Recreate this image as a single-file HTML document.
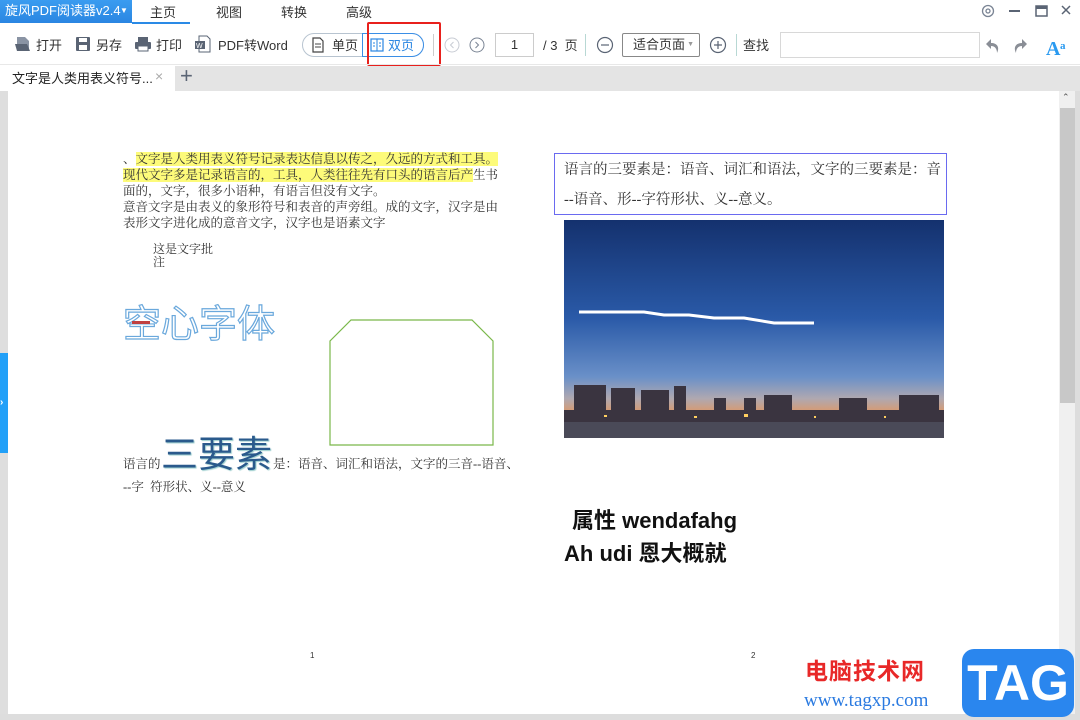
<!DOCTYPE html>
<html><head><meta charset="utf-8"><style>
*{margin:0;padding:0;box-sizing:border-box}
body{width:1080px;height:720px;overflow:hidden;background:#fff;position:relative;font-family:"Liberation Sans","Noto Sans CJK SC",sans-serif;font-size:12px;color:#333}
.a{position:absolute;white-space:nowrap}
.serif{font-family:"Liberation Serif","Noto Serif CJK SC",serif}
</style></head><body>
<!-- title bar -->
<div class="a" style="left:0;top:0;width:132px;height:23px;background:linear-gradient(#3a9cf0,#2a86e2);color:#fff;font-size:13px;line-height:22px;padding-left:5px">旋风PDF阅读器v2.4<span style="position:absolute;left:120px;top:0;font-size:8px">▼</span></div>
<div class="a" style="left:132px;top:22px;width:58px;height:2px;background:#2a8ae6"></div>
<div class="a" style="left:150px;top:2px;font-size:13px;color:#333">主页</div>
<div class="a" style="left:216px;top:2px;font-size:13px">视图</div>
<div class="a" style="left:281px;top:2px;font-size:13px">转换</div>
<div class="a" style="left:346px;top:2px;font-size:13px">高级</div>
<svg class="a" style="left:980px;top:3px" width="95" height="16"><circle cx="8" cy="8" r="5.5" fill="none" stroke="#7a8494" stroke-width="1.3"/><circle cx="8" cy="8" r="2" fill="none" stroke="#7a8494" stroke-width="1.3"/><rect x="29" y="7" width="11" height="2" fill="#5a6474"/><rect x="56" y="3" width="11" height="10" fill="none" stroke="#5a6474" stroke-width="1.5"/><rect x="56" y="3" width="11" height="3" fill="#5a6474"/><path d="M82 3l8 8M90 3l-8 8" stroke="#5a6474" stroke-width="1.5"/></svg>
<!-- toolbar -->
<svg class="a" style="left:14px;top:35px" width="18" height="18"><path d="M3 2h8l4 4v10H3z" fill="#8a94a4"/><path d="M1 9h12l3 7H3z" fill="#5a6474"/></svg>
<div class="a" style="left:36px;top:35px;font-size:13px">打开</div>
<svg class="a" style="left:74px;top:35px" width="18" height="18"><rect x="2" y="2" width="14" height="14" rx="1" fill="#5a6474"/><rect x="5" y="3" width="8" height="4" fill="#fff"/><rect x="5" y="10" width="8" height="5" fill="#fff"/></svg>
<div class="a" style="left:96px;top:35px;font-size:13px">另存</div>
<svg class="a" style="left:134px;top:35px" width="18" height="18"><rect x="4" y="2" width="10" height="5" fill="#5a6474"/><rect x="1" y="7" width="16" height="7" rx="1" fill="#5a6474"/><rect x="4" y="11" width="10" height="5" fill="#fff" stroke="#5a6474"/></svg>
<div class="a" style="left:156px;top:35px;font-size:13px">打印</div>
<svg class="a" style="left:194px;top:35px" width="18" height="18"><path d="M5 1h8l3 3v13H5z" fill="#fff" stroke="#5a6474"/><rect x="1" y="6" width="10" height="8" fill="#5a6474"/><text x="2" y="13" font-size="7" fill="#fff" font-family="Liberation Sans">W</text></svg>
<div class="a" style="left:218px;top:35px;font-size:13px">PDF转Word</div>
<div class="a" style="left:302px;top:33px;width:122px;height:24px;border:1px solid #b8c4d0;border-radius:12px"></div>
<div class="a" style="left:362px;top:33px;width:62px;height:24px;border:1px solid #3a8ee6;border-radius:0 12px 12px 0;background:#fff"></div>
<svg class="a" style="left:311px;top:37px" width="14" height="16"><path d="M2 1h7l3 3v11H2z" fill="none" stroke="#444" stroke-width="1.2"/><path d="M4 7h6M4 10h6" stroke="#444"/></svg>
<div class="a" style="left:332px;top:35px;font-size:13px">单页</div>
<svg class="a" style="left:370px;top:38px" width="14" height="14"><rect x="1" y="1" width="12" height="12" fill="none" stroke="#2a86e2" stroke-width="1.2"/><path d="M7 1v12M3 5h2M3 8h2M9 5h2M9 8h2" stroke="#2a86e2"/></svg>
<div class="a" style="left:388px;top:35px;font-size:13px;color:#2a86e2">双页</div>
<div class="a" style="left:367px;top:22px;width:74px;height:44px;border:2px solid #e8201c;border-radius:2px"></div>
<div class="a" style="left:433px;top:34px;width:1px;height:22px;background:#ccc"></div>
<svg class="a" style="left:444px;top:36px" width="44" height="18"><circle cx="8" cy="9" r="7" fill="none" stroke="#c8ccd4"/><path d="M9.5 6l-3 3 3 3" fill="none" stroke="#c8ccd4"/><circle cx="33" cy="9" r="7" fill="none" stroke="#7a8494"/><path d="M31.5 6l3 3-3 3" fill="none" stroke="#7a8494"/></svg>
<div class="a" style="left:495px;top:33px;width:39px;height:24px;border:1px solid #ccc;text-align:center;line-height:22px;font-size:13px">1</div>
<div class="a" style="left:543px;top:35px;font-size:13px">/ 3 &nbsp;页</div>
<div class="a" style="left:585px;top:34px;width:1px;height:22px;background:#b8d8d4"></div>
<svg class="a" style="left:595px;top:35px" width="20" height="20"><circle cx="10" cy="10" r="7.5" fill="none" stroke="#5a6474" stroke-width="1.2"/><path d="M6 10h8" stroke="#5a6474" stroke-width="1.2"/></svg>
<div class="a" style="left:622px;top:33px;width:78px;height:24px;border:1px solid #888;border-radius:2px;font-size:13px;line-height:21px;padding-left:10px">适合页面<span style="position:absolute;right:5px;top:0;font-size:7px;color:#999">▼</span></div>
<svg class="a" style="left:708px;top:35px" width="20" height="20"><circle cx="10" cy="10" r="7.5" fill="none" stroke="#5a6474" stroke-width="1.2"/><path d="M6 10h8M10 6v8" stroke="#5a6474" stroke-width="1.2"/></svg>
<div class="a" style="left:736px;top:34px;width:1px;height:22px;background:#b8d8d4"></div>
<div class="a" style="left:743px;top:35px;font-size:13px">查找</div>
<div class="a" style="left:780px;top:32px;width:200px;height:26px;border:1px solid #d8d8d8"></div>
<svg class="a" style="left:985px;top:33px" width="90" height="24"><path d="M12 20c3-6 0-10-6-10V6L1 11l5 5v-3c4 0 6 3 6 7z" fill="#8a8e96"/><path d="M31 20c-3-6 0-10 6-10V6l5 5-5 5v-3c-4 0-6 3-6 7z" fill="#8a8e96"/><text x="61" y="22" font-size="20" font-weight="bold" fill="#2a9af0" font-family="Liberation Serif">A</text><text x="75" y="16" font-size="11" font-weight="bold" fill="#2a9af0" font-family="Liberation Serif">a</text></svg>
<div class="a" style="left:0;top:64px;width:1080px;height:1px;background:#e8e8e8"></div>
<!-- tab bar -->
<div class="a" style="left:0;top:66px;width:1080px;height:25px;background:#e4e4e4"></div>
<div class="a" style="left:0;top:66px;width:175px;height:25px;background:#fff"></div>
<div class="a" style="left:12px;top:68px;font-size:13px;color:#222">文字是人类用表义符号...</div>
<div class="a" style="left:155px;top:68px;font-size:14px;color:#aaa">×</div>
<div class="a" style="left:180px;top:63px;font-size:22px;color:#5a6474;font-weight:300">+</div>
<!-- doc area -->
<div class="a" style="left:0;top:91px;width:8px;height:629px;background:#dedede"></div>
<div class="a" style="left:0;top:353px;width:8px;height:100px;background:#22a0f8;color:#fff;font-size:10px;line-height:100px;font-weight:bold">›</div>
<div class="a" style="left:1059px;top:91px;width:16px;height:629px;background:#f0f0f0"></div>
<div class="a" style="left:1060px;top:108px;width:15px;height:295px;background:#c8c8c8"></div>
<div class="a" style="left:1062px;top:92px;font-size:9px;color:#555">⌃</div>
<div class="a" style="left:1075px;top:91px;width:5px;height:629px;background:#ddd"></div>
<div class="a" style="left:0;top:714px;width:1080px;height:6px;background:#ddd"></div>
<!-- page 1 -->
<div class="a serif" style="left:123px;top:151px;font-size:12.5px;line-height:16px;color:#333">
<div>、<span style="background:#fdfb7a">文字是人类用表义符号记录表达信息以传之，久远的方式和工具。</span></div>
<div><span style="background:#fdfb7a">现代文字多是记录语言的，工具，人类往往先有口头的语言后产</span>生书</div>
<div>面的，文字，很多小语种，有语言但没有文字。</div>
<div>意音文字是由表义的象形符号和表音的声旁组。成的文字，汉字是由</div>
<div>表形文字进化成的意音文字，汉字也是语素文字</div>
</div>
<div class="a serif" style="left:153px;top:243px;font-size:12px;line-height:13px">这是文字批<br>注</div>
<div class="a" style="left:123px;top:296px;font-size:38px;line-height:50px;color:#fff;-webkit-text-stroke:1.2px #6aa8dc;font-family:'Noto Sans CJK SC',sans-serif">空心字体</div>
<div class="a" style="left:132px;top:321px;width:18px;height:3px;background:#c04040"></div>
<svg class="a" style="left:329px;top:319px" width="166" height="128"><path d="M22 1H143L164 22V126H1V22Z" fill="none" stroke="#7ab84a" stroke-width="1.2"/></svg>
<div class="a serif" style="left:123px;top:454px;font-size:12.5px">语言的</div>
<div class="a" style="left:161px;top:426px;font-size:37px;line-height:50px;color:#2a5a8c;font-family:'Noto Sans CJK SC',sans-serif;text-shadow:1px 1px 1px #9cc">三要素</div>
<div class="a serif" style="left:273px;top:454px;font-size:12.5px">是：语音、词汇和语法，文字的三音--语音、</div>
<div class="a serif" style="left:123px;top:477px;font-size:12.5px">--字 &nbsp;符形状、义--意义</div>
<div class="a" style="left:310px;top:651px;font-size:8px">1</div>
<!-- page 2 -->
<div class="a" style="left:554px;top:153px;width:393px;height:62px;border:1.5px solid #6a6af0"></div>
<div class="a serif" style="left:564px;top:155px;font-size:14.5px;line-height:30px;color:#333">语言的三要素是：语音、词汇和语法，文字的三要素是：音<br>--语音、形--字符形状、义--意义。</div>
<svg class="a" style="left:564px;top:220px" width="380" height="218">
<defs><linearGradient id="sky" x1="0" y1="0" x2="0" y2="1"><stop offset="0" stop-color="#14316e"/><stop offset="0.45" stop-color="#2a5aa8"/><stop offset="0.72" stop-color="#6a90c8"/><stop offset="0.82" stop-color="#b0a8b0"/><stop offset="0.88" stop-color="#d89a70"/></linearGradient></defs>
<rect width="380" height="218" fill="url(#sky)"/>
<path d="M15 92H80L100 95H125L150 98H180L210 103H250" stroke="#fff" stroke-width="3" fill="none"/>
<g fill="#3a3440"><rect x="10" y="165" width="32" height="35"/><rect x="47" y="168" width="24" height="32"/><rect x="77" y="170" width="28" height="30"/><rect x="110" y="166" width="12" height="34"/><rect x="150" y="178" width="12" height="22"/><rect x="180" y="178" width="12" height="22"/><rect x="200" y="175" width="28" height="25"/><rect x="275" y="178" width="28" height="22"/><rect x="335" y="175" width="40" height="25"/><rect x="0" y="190" width="380" height="12"/></g>
<rect y="202" width="380" height="16" fill="#4a4a58"/>
<g fill="#ffcf60"><rect x="40" y="195" width="3" height="2"/><rect x="130" y="196" width="3" height="2"/><rect x="180" y="194" width="4" height="3"/><rect x="250" y="196" width="2" height="2"/><rect x="320" y="196" width="2" height="2"/></g>
</svg>
<div class="a" style="left:572px;top:503px;font-size:22px;font-weight:bold;color:#111;font-family:'Liberation Sans','Noto Sans CJK SC',sans-serif">属性 wendafahg</div>
<div class="a" style="left:564px;top:536px;font-size:22px;font-weight:bold;color:#111;font-family:'Liberation Sans','Noto Sans CJK SC',sans-serif">Ah udi 恩大概就</div>
<div class="a" style="left:751px;top:651px;font-size:8px">2</div>
<!-- watermark -->
<div class="a" style="left:805px;top:652px;font-size:23px;font-weight:bold;color:#e82828;font-family:'Noto Sans CJK SC',sans-serif;letter-spacing:1px">电脑技术网</div>
<div class="a serif" style="left:804px;top:690px;font-size:19px;color:#2a7ae0">www.tagxp.com</div>
<div class="a" style="left:962px;top:649px;width:112px;height:68px;background:#2a86ee;border-radius:12px;color:#fff;font-size:50px;font-weight:bold;line-height:68px;text-align:center;font-family:'Liberation Sans',sans-serif">TAG</div>
</body></html>
